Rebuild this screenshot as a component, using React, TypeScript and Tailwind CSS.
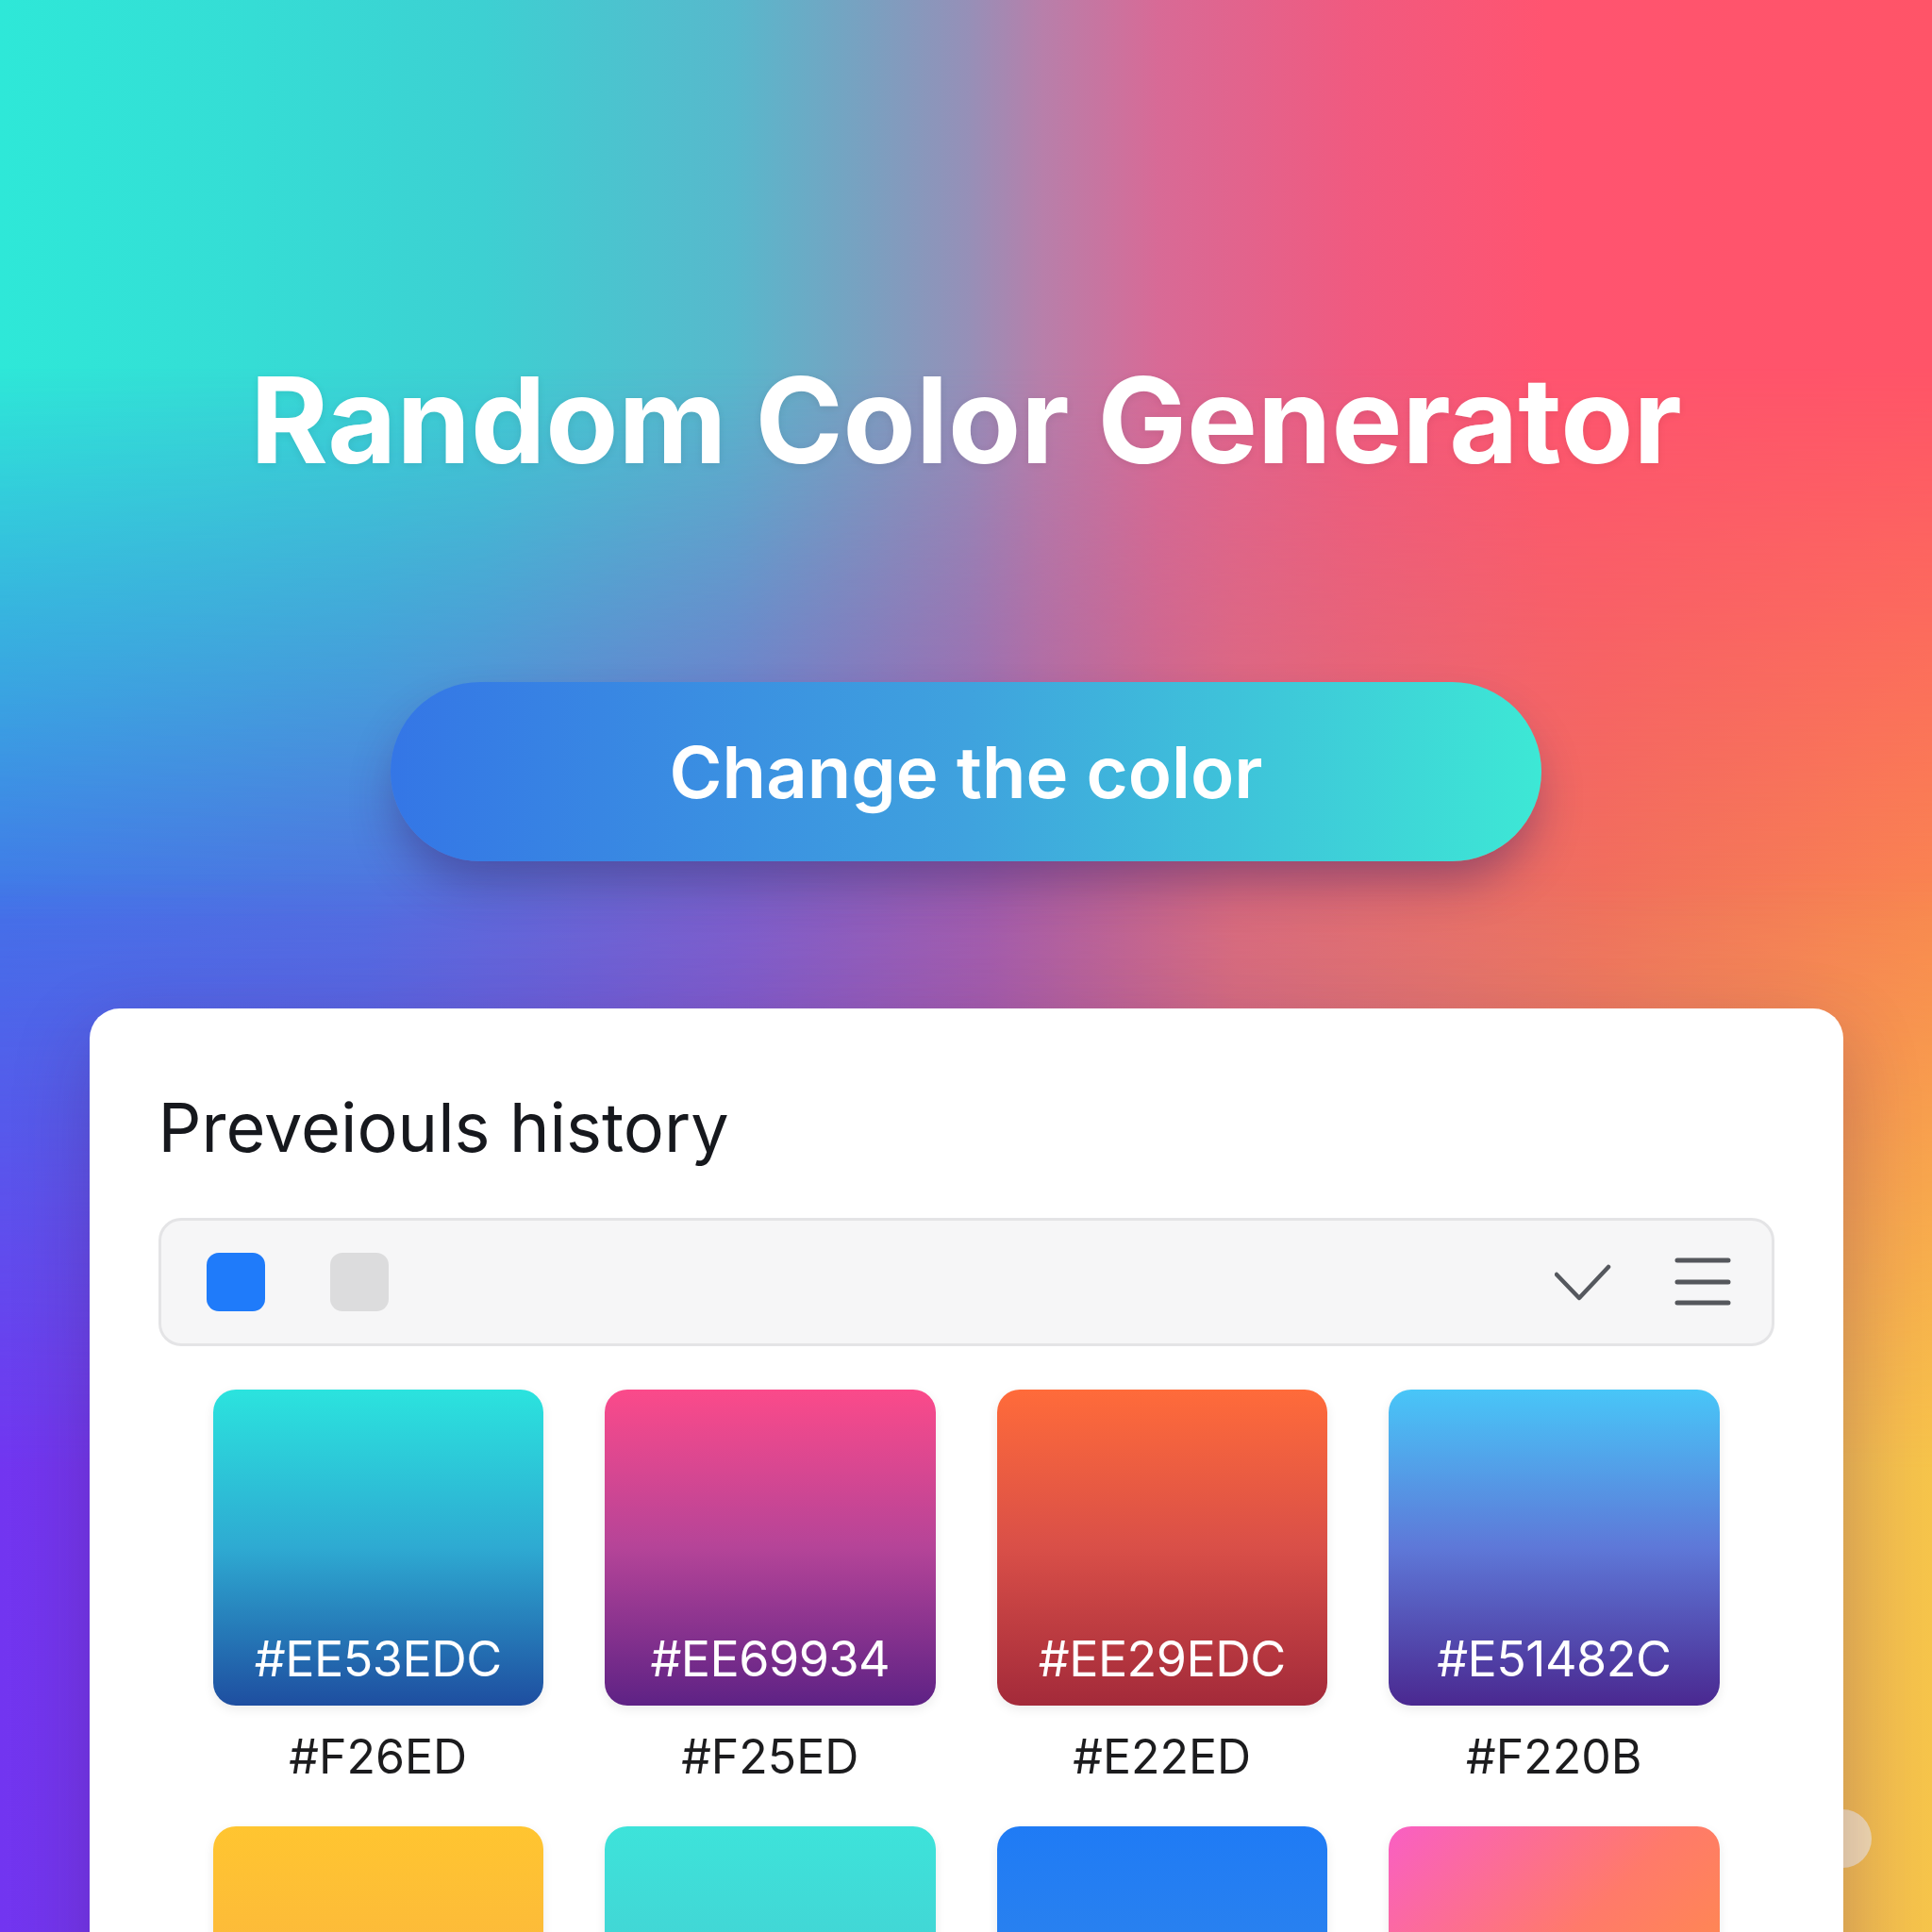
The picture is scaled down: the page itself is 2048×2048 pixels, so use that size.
import * as React from 'react';

const swatches = [
    { hex: '#EE53EDC', label: '#F26ED', bg: 'bg-[linear-gradient(to_bottom,#2be3de_0%,#2eaad2_50%,#1e4ea0_100%)]' },
    { hex: '#EE69934', label: '#F25ED', bg: 'bg-[linear-gradient(to_bottom,#fb4a8a_0%,#b54498_50%,#5e2285_100%)]' },
    { hex: '#EE29EDC', label: '#E22ED', bg: 'bg-[linear-gradient(to_bottom,#ff6b3a_0%,#d94f48_50%,#a32a3a_100%)]' },
    { hex: '#E51482C', label: '#F220B', bg: 'bg-[linear-gradient(to_bottom,#48c6f8_0%,#5e78d8_50%,#4a2890_100%)]' },
    { hex: '#FFB63A2', label: '#F7A04', bg: 'bg-[linear-gradient(to_bottom,#ffc530_0%,#f8a94a_100%)]' },
    { hex: '#3DE2DA0', label: '#4AC0C', bg: 'bg-[linear-gradient(to_bottom,#3de3da_0%,#4ac0cd_100%)]' },
    { hex: '#1F7BF51', label: '#3A8BE', bg: 'bg-[linear-gradient(to_bottom,#1f7bf5_0%,#3a8be5_100%)]' },
    { hex: '#F95FC48', label: '#FF963', bg: 'bg-[linear-gradient(135deg,#f95fc4_0%,#ff7a6a_45%,#ff9638_100%)]' },
];

function CheckIcon() {
    return (
        <svg width="60" height="40" viewBox="0 0 60 40" fill="none">
            <path d="M2 12 L26 37 L57 4" stroke="#55585e" strokeWidth="4.5" strokeLinecap="round" strokeLinejoin="round" />
        </svg>
    );
}

function MenuIcon() {
    return (
        <svg width="60" height="52" viewBox="0 0 60 52" fill="none">
            <path d="M3 3 H57 M3 26 H57 M3 48 H57" stroke="#55575c" strokeWidth="5" strokeLinecap="round" />
        </svg>
    );
}

export default function App() {
    return (
        <div className="grid h-[2048px] w-full overflow-hidden font-['Inter','Noto_Sans',sans-serif]">
            {/* background mesh */}
            <div className="col-start-1 row-start-1 bg-[linear-gradient(to_right,#2ee8d8_0%,#35ddd5_13%,#3dd0d2_25%,#58b8cc_38%,#7aa0c0_45%,#9590b8_50%,#b87faa_54%,#d86a96_60%,#f05a80_70%,#ff5470_80%,#ff5468_100%)]" />
            <div className="col-start-1 row-start-1 bg-[linear-gradient(to_right,#4274e8_0%,#5070e0_19%,#7a60cc_38%,#a05cac_51%,#d86a7c_64%,#f0705c_83%,#f98650_100%)] [mask-image:linear-gradient(to_bottom,transparent_16%,black_40%)]" />
            <div className="col-start-1 row-start-1 bg-[linear-gradient(to_right,#7235f0_0%,#8040dc_30%,#c86a98_60%,#f6c44a_100%)] [mask-image:linear-gradient(to_bottom,transparent_38%,black_64%)]" />

            <div className="relative col-start-1 row-start-1 flex flex-col items-center pt-[370px]">
                <h1 className="text-[126px] font-bold leading-[1.2] text-white [text-shadow:0_2px_8px_rgba(0,0,0,0.08)]">
                    Random Color Generator
                </h1>

                <button className="mt-[202px] flex h-[190px] w-[1220px] items-center justify-center rounded-full bg-[linear-gradient(to_right,#3476e6_0%,#3fa2de_50%,#3de8d5_100%)] text-[76px] font-semibold text-white shadow-[0_28px_50px_-8px_rgba(50,30,100,0.45)]">
                    Change the color
                </button>

                {/* floating dot behind the card */}
                <div className="absolute left-[1922px] top-[1918px] size-[62px] rounded-full bg-[#f2dab0]" />

                <div className="relative z-10 mt-[156px] w-[1859px] rounded-[32px] bg-white px-[73px] pt-[83px] pb-[80px] shadow-[0_30px_80px_rgba(60,20,80,0.25)]">
                    <h2 className="text-[72px] leading-[1.2] text-[#16181d]">Preveiouls history</h2>

                    <div className="mt-[52px] flex h-[136px] items-center rounded-[24px] border-[3px] border-[#e4e4e6] bg-[#f6f6f7] pl-[48px] pr-[43px]">
                        <div className="size-[62px] rounded-[13px] bg-[#1f7bfa]" />
                        <div className="ml-[69px] size-[62px] rounded-[13px] bg-[#dcdcdd]" />
                        <div className="ml-auto flex items-center gap-[67px]">
                            <CheckIcon />
                            <MenuIcon />
                        </div>
                    </div>

                    <div className="mt-[46px] grid grid-cols-4 gap-x-[65px] gap-y-[44px] px-[58px]">
                        {swatches.map((s) => (
                            <div key={s.hex} className="flex flex-col items-center">
                                <div className={`flex h-[335px] w-full items-end justify-center rounded-[24px] pb-[17px] shadow-[0_4px_12px_rgba(0,0,0,0.08)] ${s.bg}`}>
                                    <span className="text-[52px] leading-[1.2] tracking-[-0.01em] text-white">{s.hex}</span>
                                </div>
                                <span className="mt-[24px] text-[50px] leading-[1.2] text-[#1c1c1e]">{s.label}</span>
                            </div>
                        ))}
                    </div>
                </div>
            </div>
        </div>
    );
}
